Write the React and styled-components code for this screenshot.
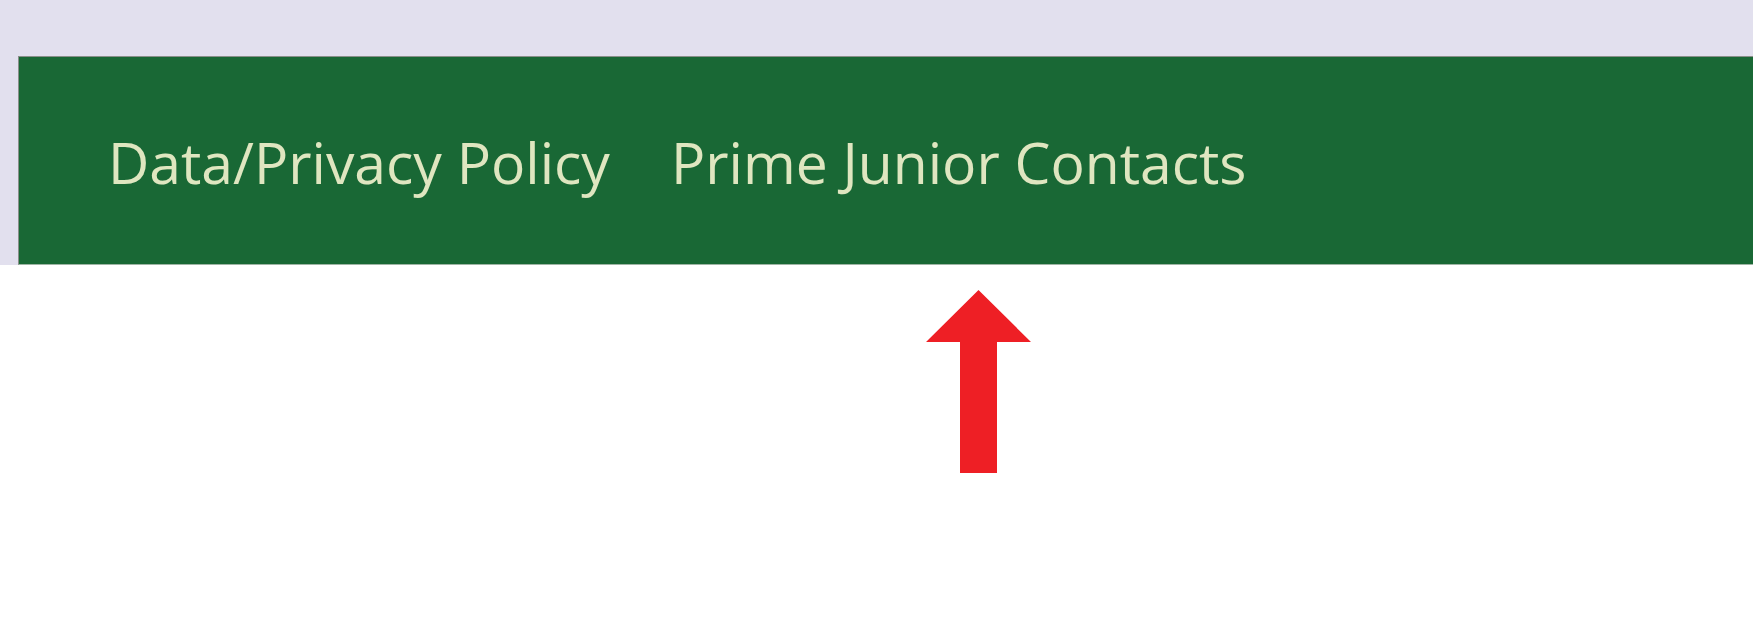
import React from "react";
import styled, { createGlobalStyle } from "styled-components";

const GlobalStyle = createGlobalStyle`
  html, body {
    margin: 0;
    padding: 0;
    background: #ffffff;
  }
`;

const Page = styled.div`
  width: 1753px;
  height: 630px;
  overflow: hidden;
  background: #ffffff;
`;

const TopBand = styled.div`
  background: #e2e0ee;
  padding: 56px 0 0 18px;
`;

const NavBar = styled.nav`
  height: 209px;
  display: flex;
  align-items: center;
  gap: 61px;
  padding: 2px 0 0 89px;
  box-sizing: border-box;
  background: #196835;
  border-top: 1px solid #8a8f8a;
  border-left: 1px solid #8a8f8a;
  border-bottom: 1px solid #9fb5a5;
`;

const NavLink = styled.a`
  font-family: "Open Sans", "Noto Sans", sans-serif;
  font-size: 57px;
  color: #dfe6c0;
  text-decoration: none;
  white-space: nowrap;
`;

const Pointer = styled.div`
  padding: 25px 0 0 926px;
`;

const Arrow = () => (
  <svg width="105" height="183" viewBox="0 0 105 183">
    <polygon points="52.5,0 105,52 71,52 71,183 34,183 34,52 0,52" fill="#ee1f25" />
  </svg>
);

export default function App() {
  return (
    <Page>
      <GlobalStyle />
      <TopBand>
        <NavBar>
          <NavLink href="#">Data/Privacy Policy</NavLink>
          <NavLink href="#">Prime Junior Contacts</NavLink>
        </NavBar>
      </TopBand>
      <Pointer>
        <Arrow />
      </Pointer>
    </Page>
  );
}
